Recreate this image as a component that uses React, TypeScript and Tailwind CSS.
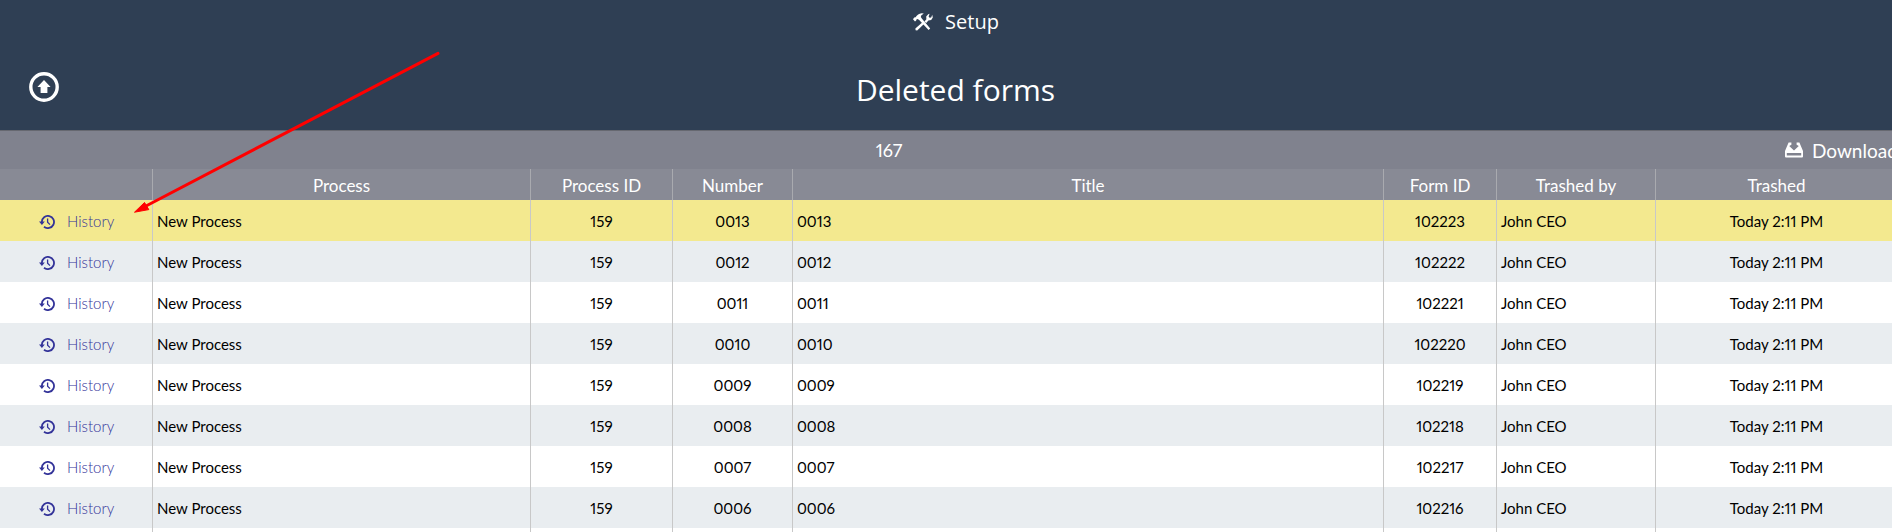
type Form = {
    number: string
    formId: string
}

const forms: Form[] = [
    { number: '0013', formId: '102223' },
    { number: '0012', formId: '102222' },
    { number: '0011', formId: '102221' },
    { number: '0010', formId: '102220' },
    { number: '0009', formId: '102219' },
    { number: '0008', formId: '102218' },
    { number: '0007', formId: '102217' },
    { number: '0006', formId: '102216' },
]

const columns = [
    { name: '', width: 'w-[153px]' },
    { name: 'Process', width: 'w-[378px]' },
    { name: 'Process ID', width: 'w-[142px]' },
    { name: 'Number', width: 'w-[120px]' },
    { name: 'Title', width: '' },
    { name: 'Form ID', width: 'w-[113px]' },
    { name: 'Trashed by', width: 'w-[159px]' },
    { name: 'Trashed', width: 'w-[242px]' },
]

function ToolsIcon() {
    return (
        <svg viewBox="0 0 20 18" className="h-[18px] w-5" fill="currentColor">
            <path d="M0 6.2 1.2 4.6 2.6 4.2C4 2.2 6 .4 8.6.2L10.8.6 8.2 2.4 7.8 4 8.8 5.4 17.2 15.4 15.6 17 6.2 7 4.6 6 3.4 6.4 3.2 7.6 2 8.4Z" />
            <path d="M2.4 15.6 9.2 9.4 11 11 4.2 17.4 2.6 17.2Z" />
            <path d="M11.4 8.4 13.4 6.2 13.2 3.6 15.2 1.2 16.6.8 15.6 3.4 16.6 4.8 18.2 4.4 19.2 1.8 19.8 4.4 18.2 7 15.4 7.6 13.2 10Z" />
        </svg>
    )
}

function DownloadIcon() {
    return (
        <svg viewBox="0 0 18 16" className="h-4 w-[18px]" fill="currentColor">
            <path
                fillRule="evenodd"
                d="M3.6.6H6.4V2.8L4.2 4 9 8.6 13.8 4 11.6 2.8V.6H14.4L18 9V14.6Q18 15.6 17 15.6H1Q0 15.6 0 14.6V9ZM1.8 11V13.6H16.2V11Z"
            />
            <path d="M7.8.8H10.2V3.8H12.2L9 7 5.8 3.8H7.8Z" className="fill-[#80828e]" />
        </svg>
    )
}

function HistoryIcon() {
    return (
        <svg
            viewBox="0 0 16 14"
            className="h-[14px] w-4"
            fill="none"
            stroke="currentColor"
            strokeWidth="1.8">
            <path d="M2.8 7A6.1 6.1 0 1 1 5 11.7" />
            <path d="M8.6 3.4V7.2L11 9.6" strokeWidth="1.3" />
            <path d="M0 6.6H5.8L2.9 9.9Z" fill="currentColor" stroke="none" />
        </svg>
    )
}

function UpIcon() {
    return (
        <svg viewBox="0 0 30 30" className="size-[30px]">
            <circle cx="15" cy="15" r="13.2" fill="none" stroke="currentColor" strokeWidth="3.4" />
            <path d="M15 8 21.6 15H18.4V21H11.6V15H8.4Z" fill="currentColor" />
        </svg>
    )
}

function Arrow() {
    return (
        <svg
            viewBox="0 0 310 166"
            className="pointer-events-none absolute top-[50px] left-[132px] h-[166px] w-[310px]">
            <path d="M306 3.4 14 156" stroke="#ff0000" strokeWidth="3" strokeLinecap="round" />
            <path d="M2.5 162.2 12.5 152.5 16.8 159.6Z" fill="#ff0000" stroke="#ff0000" />
        </svg>
    )
}

export default function App() {
    return (
        <div className="relative h-screen overflow-hidden bg-white font-[Lato,sans-serif] text-base text-black proportional-nums">
            <header className="h-[131px] border-b border-[#666870] bg-[#2f3f54] font-['Open_Sans',sans-serif] text-white">
                <div className="flex h-11 items-center justify-center gap-3 pl-5">
                    <ToolsIcon />
                    <span className="text-xl">Setup</span>
                </div>
                <div className="flex items-center pt-[18px] pl-[29px]">
                    <button type="button" aria-label="Up">
                        <UpIcon />
                    </button>
                    <h1 className="flex-1 pt-1.5 pr-10 text-center text-[30px] leading-[44px]">
                        Deleted forms
                    </h1>
                </div>
            </header>

            <div className="flex h-[38px] items-center bg-[#80828e] text-lg text-white">
                <div className="flex-1 text-center">167</div>
                <button
                    type="button"
                    className="flex w-[114px] items-center gap-[9px] pt-px pl-[7px] text-[19px]">
                    <span className="shrink-0">
                        <DownloadIcon />
                    </span>
                    Download
                </button>
            </div>

            <table className="w-[calc(100%+6px)] table-fixed border-separate border-spacing-0">
                <thead>
                    <tr className="h-[31px] bg-[#888a95] text-[17px] leading-6 text-white">
                        {columns.map((column) => (
                            <th
                                key={column.name}
                                className={`border-r border-[#a9aaaf] px-0 pt-0.5 pb-0 font-normal ${column.width}`}>
                                {column.name}
                            </th>
                        ))}
                    </tr>
                </thead>
                <tbody className="text-[15px] [&_td]:border-r [&_td]:border-[#c8c8c8] [&_td]:pt-0.5 [&_td]:pb-0">
                    {forms.map((form, index) => (
                        <tr
                            key={form.formId}
                            className={
                                index === 0
                                    ? 'h-[41px] bg-[#f3e98f]'
                                    : 'h-[41px] odd:bg-white even:bg-[#e9edf0]'
                            }>
                            <td className="px-0">
                                <a
                                    href="#history"
                                    className="flex items-center gap-3 pl-[39px] text-[#333399]">
                                    <HistoryIcon />
                                    <span className="font-light">History</span>
                                </a>
                            </td>
                            <td className="px-1">New Process</td>
                            <td className="text-center">159</td>
                            <td className="text-center">{form.number}</td>
                            <td className="px-1">{form.number}</td>
                            <td className="text-center">{form.formId}</td>
                            <td className="px-1">John CEO</td>
                            <td className="text-center">Today 2:11 PM</td>
                        </tr>
                    ))}
                    <tr className="h-[41px]">
                        {columns.map((column) => (
                            <td key={column.name} />
                        ))}
                    </tr>
                </tbody>
            </table>

            <Arrow />
        </div>
    )
}
